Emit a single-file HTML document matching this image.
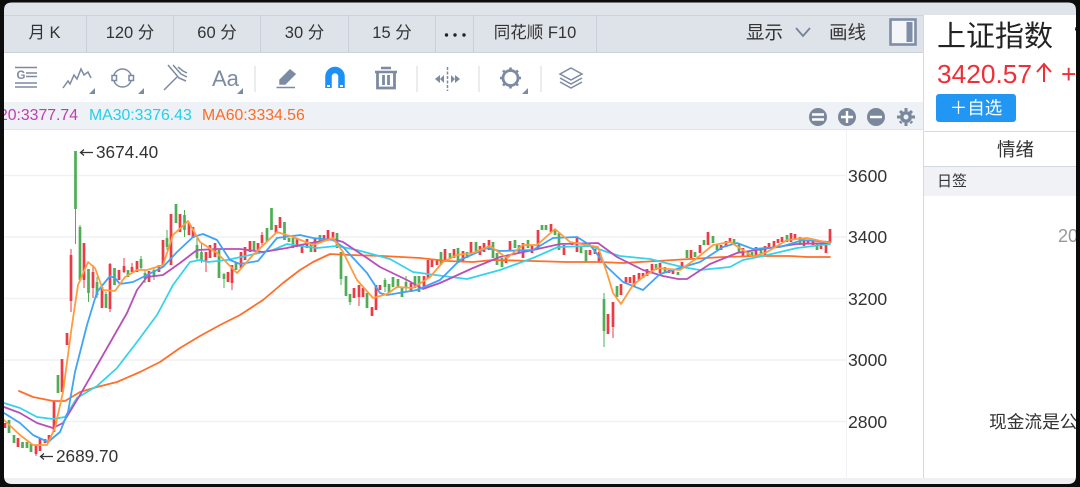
<!DOCTYPE html>
<html><head><meta charset="utf-8"><style>
*{margin:0;padding:0;box-sizing:border-box}
html,body{width:1080px;height:487px;overflow:hidden;background:#fff}
body{position:relative;font-family:"Liberation Sans","Noto Sans CJK SC",sans-serif;color:#333}
#w{position:absolute;left:0;top:0;width:1080px;height:487px;filter:blur(.35px)}
.a{position:absolute;white-space:nowrap}
.tab{position:absolute;top:15px;height:38px;line-height:37px;text-align:center;font-size:16.5px;border-right:1px solid #c9d0d9;color:#333}
svg{position:absolute;left:0;top:0}
</style></head><body><div id="w">
<div class="a" style="left:0;top:0;width:1080px;height:15px;background:#dfe4ea"></div>
<div class="a" style="left:0;top:15px;width:923px;height:38px;background:#dee3e9;border-top:1px solid #ccd3db;border-bottom:1px solid #ccd3db"></div>
<div class="tab" style="left:0;width:87px;padding-left:3px">月 K</div>
<div class="tab" style="left:87px;width:87px">120 分</div>
<div class="tab" style="left:174px;width:87px">60 分</div>
<div class="tab" style="left:261px;width:88px">30 分</div>
<div class="tab" style="left:349px;width:87px">15 分</div>
<div class="tab" style="left:436px;width:38px"></div>
<div class="tab" style="left:474px;width:123px">同花顺 F10</div>
<div class="a" style="left:746px;top:20px;font-size:18.5px;line-height:26px">显示</div>
<div class="a" style="left:829px;top:20px;font-size:18.5px;line-height:26px">画线</div>
<div class="a" style="left:0;top:102px;width:923px;height:28px;background:#eef1f5;border-bottom:1px solid #e0e4ea"></div>
<div class="a" style="left:923px;top:15px;width:1px;height:470px;background:#d5dae1"></div>
<div class="a" style="left:846px;top:130px;width:1px;height:348px;background:#eef0f3"></div>
<div class="a" style="left:0;top:478px;width:1080px;height:7px;background:#eef0f4"></div>

<div class="a" style="right:1002px;top:106px;font-size:15.8px;line-height:20px;color:#c23bb0">20:3377.74</div>
<div class="a" style="left:89px;top:106px;font-size:15.8px;line-height:20px;color:#22d0ea">MA30:3376.43</div>
<div class="a" style="left:202px;top:106px;font-size:15.8px;line-height:20px;color:#ff6a1f">MA60:3334.56</div>

<div class="a" style="left:96px;top:142px;font-size:17.2px;line-height:20px">3674.40</div>
<div class="a" style="left:56px;top:446px;font-size:17.2px;line-height:20px">2689.70</div>
<div class="a" style="left:848px;top:166px;font-size:17.6px;line-height:20px">3600</div>
<div class="a" style="left:848px;top:227px;font-size:17.6px;line-height:20px">3400</div>
<div class="a" style="left:848px;top:289px;font-size:17.6px;line-height:20px">3200</div>
<div class="a" style="left:848px;top:350px;font-size:17.6px;line-height:20px">3000</div>
<div class="a" style="left:848px;top:412px;font-size:17.6px;line-height:20px">2800</div>

<div class="a" style="left:937px;top:17px;font-size:29px;line-height:40px;color:#222">上证指数</div>
<div class="a" style="left:1074px;top:24px;font-size:16px;line-height:20px;color:#222">‘</div>
<div class="a" style="left:937px;top:58px;font-size:26.3px;line-height:32px;color:#ee2f37">3420.57</div>
<div class="a" style="left:1061px;top:58px;font-size:26.3px;line-height:32px;color:#ee2f37">+3</div>
<div class="a" style="left:936px;top:94px;width:80px;height:28px;background:#2196f3;border-radius:3px;color:#fff;font-size:17.5px;line-height:29px;text-align:center">＋自选</div>
<div class="a" style="left:924px;top:131px;width:156px;height:1px;background:#d5dae1"></div>
<div class="a" style="left:997px;top:137px;font-size:18.5px;line-height:26px">情绪</div>
<div class="a" style="left:924px;top:166px;width:156px;height:30px;background:#f0f2f5;border-top:1px solid #d5dae1"></div>
<div class="a" style="left:937px;top:171px;font-size:15px;line-height:22px">日签</div>
<div class="a" style="left:1058px;top:226px;font-size:18px;line-height:20px;color:#999">20</div>
<div class="a" style="left:989px;top:410px;font-size:17.7px;line-height:24px">现金流是公</div>

<svg width="1080" height="487" viewBox="0 0 1080 487" fill="none">
<!-- tab dots -->
<g fill="#222"><circle cx="446.500" cy="35" r="1.700"/><circle cx="455" cy="35" r="1.700"/><circle cx="464" cy="35" r="1.700"/></g>
<!-- price up arrow -->
<path stroke="#ee2f37" stroke-width="2" d="M1044 64V82M1037 72L1044 64L1051 72"/>
<!-- grid -->
<path d="M4 175.5H846M4 237H846M4 298.5H846M4 360H846M4 421.5H846" stroke="#f0f1f3" stroke-width="1.4"/>
<!-- red candles wicks -->
<path stroke="#ee3a44" stroke-width="1" d="M36 445V456M71 249V312M84 243V288M93 265V298M110 263V312M124 258V273M132 263V273M206 252V272M232 265V290M262 232V247M359 285V306M613 302V338"/>
<!-- red bodies -->
<path stroke="#ee3a44" stroke-width="2.7" d="M5 423V428M18 438V447M36 445V454M40 438V451M45 439V443M49 435V442M54 401V432M62 359V392M67 333V345M71 255V301M84 243V280M93 272V288M102 287V308M110 264V309M119 270V280M124 266V272M132 267V272M137 261V272M149 271V282M159 265V272M163 240V267M171 214V265M180 214V232M189 223V235M193 227V238M206 252V261M210 245V258M215 243V257M228 272V282M232 265V283M241 252V268M245 247V260M250 241V252M258 243V252M262 235V243M276 225V233M280 217V228M297 238V247M302 245V253M307 239V248M315 238V252M324 235V241M328 230V240M333 232V240M354 288V298M359 285V297M363 288V297M372 307V316M376 285V310M380 285V290M411 283V292M424 276V288M428 260V278M432 260V267M437 259V265M445 249V262M454 249V258M463 251V262M471 242V253M480 246V255M484 243V252M489 240V250M506 255V263M510 241V250M523 243V258M532 245V253M538 230V248M551 224V232M564 245V255M572 242V245M577 238V252M590 250V255M595 249V254M599 252V262M608 314V334M613 302V327M621 284V295M626 277V284M630 277V283M634 275V286M639 273V280M643 273V278M647 269V276M652 264V273M660 263V273M669 270V273M673 270V274M682 262V269M691 250V258M700 245V253M708 232V245M721 245V250M726 241V247M730 238V243M743 248V256M756 247V256M765 246V255M769 243V248M774 241V247M778 239V243M782 237V242M791 233V242M795 234V240M804 241V246M808 240V244M813 241V245M821 243V249M826 242V253M830 229V243"/>
<!-- green wicks -->
<path stroke="#4fae54" stroke-width="1" d="M75.5 151V244M80 225V282M88.5 269V302M97 277V298M106 292V308M141 256V270M145 270V283M154 267V280M167 230V250M184.5 210V237M197 235V260M201.5 243V263M224 273V288M341 252V285M350 294V305M385 278V292M406 276V292M604 293V347"/>
<!-- green bodies -->
<path stroke="#4fae54" stroke-width="2.7" d="M9 420V433M14 435V443M22.5 442V448M27 442V448M31 444V452M58 375V393M75.5 151V209M80 227V280M88.5 269V293M97 282V295M106 294V308M114.5 268V285M128 270V277M141 259V268M145 273V279M154 270V277M167 238V247M176 204V223M184.5 215V230M197 245V258M201.5 252V260M219 250V278M224 274V279M236 263V270M254 241V250M267 228V241M271.5 208V230M284.5 222V240M289 238V242M293 238V248M311 242V252M320 235V242M337 233V248M341 252V279M346 276V296M350 294V302M367 293V308M385 280V287M389 284V293M393 277V287M398 279V287M402 288V297M406 282V288M415 276V288M419 276V292M441 252V265M450 253V258M458 248V263M467 252V258M476 242V252M493 242V258M497 253V265M502 258V267M515 240V248M519 245V253M528 240V248M542 225V230M546 225V230M555 229V235M559 233V250M581 247V253M586 250V262M604 299V331M617 286V297M656 264V270M665 267V272M678 272V275M687 250V258M695 252V257M704 240V245M713 236V243M717 244V250M734 239V243M739 243V253M748 252V256M752 252V256M761 248V254M787 235V242M800 237V245M817 243V250"/>
<g stroke-width="1.8" stroke-linejoin="round" stroke-linecap="round">
<!-- MA60 -->
<polyline stroke="#ff6f2a" points="19,391 33,397 53,401 65,401 80,392 97,387 117,382 140,372 160,362 180,348 200,336 220,325 240,315 263,300 283,283 300,270 313,262 330,254 350,255 383,256 420,258 447,261 473,262 493,260 533,261 567,262 600,262 623,263 657,261 690,259 723,257 757,256 790,256 807,257 830,257"/>
<!-- MA30 -->
<polyline stroke="#35d3ea" points="4,403 20,408 37,417 53,419 65,417 77,398 97,386 117,368 137,342 157,315 173,285 190,262 200,260 208,262 227,260 250,255 273,250 287,244 300,246 317,248 337,246 342,247 357,250 390,259 413,272 443,276 467,279 500,270 533,258 558,247 590,246 607,252 620,256 650,259 682,267 700,270 730,267 743,260 763,256 797,248 830,244"/>
<!-- MA20 -->
<polyline stroke="#b84fb8" points="4,407 20,413 37,423 53,428 63,423 80,395 103,355 127,313 137,290 147,277 163,275 180,263 197,250 217,249 240,249 263,252 287,248 300,245 333,239 343,242 367,258 380,267 407,280 423,289 440,283 473,268 500,257 533,250 560,244 598,243 617,257 643,270 663,276 678,279 687,279 710,264 737,253 763,249 797,244 830,243"/>
<!-- MA10 -->
<polyline stroke="#3fa4f8" points="4,413 20,423 33,435 48,442 60,432 68,412 75,372 87,325 97,292 110,276 115,278 120,284 133,282 147,275 163,267 177,252 193,237 203,234 217,240 230,260 240,264 258,261 277,238 300,235 313,238 333,240 343,247 367,273 380,293 387,295 417,290 440,280 460,260 487,248 500,251 533,250 553,238 577,237 590,245 607,267 623,282 643,290 660,274 680,268 700,262 723,247 737,243 753,249 780,247 803,240 830,242"/>
<!-- MA5 -->
<polyline stroke="#ff9c3e" points="4,420 20,435 33,445 47,445 55,428 63,392 72,325 78,285 88,262 95,268 103,290 115,291 125,277 137,270 147,270 163,265 173,235 188,221 200,242 217,253 237,273 253,255 277,232 293,237 313,245 333,238 343,252 357,280 373,298 387,294 397,287 413,288 430,277 443,262 457,255 473,253 490,246 507,258 523,245 537,245 555,229 570,242 598,247 607,273 613,293 621,304 633,285 643,277 657,268 680,270 697,258 713,245 730,242 743,250 753,257 767,252 787,240 807,238 830,243"/>
</g>
<!-- price arrows -->
<path stroke="#333" stroke-width="1.3" d="M81 152.5H93M84 149.5L80.5 152.5L84 155.5M41 456.5H53M44 453.5L40.5 456.5L44 459.5"/>
<!-- chevron -->
<path stroke="#74839a" stroke-width="1.8" d="M796 28L803 36L810 28"/>
<!-- panel icon -->
<rect x="890.5" y="19.5" width="25" height="25" stroke="#7f8ea6" stroke-width="2.6" fill="#f3f5f8"/>
<rect x="906.5" y="22" width="6" height="20" fill="#7f8ea6"/>
<!-- toolbar icons -->
<g stroke="#7c8aa2" stroke-width="1.5" fill="none">
<path d="M15 67.500H37M26 73H37M26 76.500H37M15 83H37M15 87H37"/>
<path d="M63 88L68 81L70 84L74 75L77 79L81 69L84 75L88 72L91 78"/>
<circle cx="122.500" cy="78" r="9"/><rect x="112" y="75.500" width="4.500" height="5" fill="#fff"/><rect x="129" y="75.500" width="4.500" height="5" fill="#fff"/>
<path d="M164 90L177 77M168 65L179 78L186 81M173 65L181 74L187 77M178 67L183 71L187 73"/>
<path stroke="#e4e7ec" stroke-width="1.6" d="M255 66V92M417 66V92M479 66V92M541 66V92"/>
<path stroke-width="1.6" d="M276.5 87.5H295"/>
<path d="M280 80L290 70L295 74L285 84H280Z" fill="#7c8aa2"/>
<path stroke-width="2.5" d="M375 72H397M381 68H391"/>
<path stroke-width="2.8" d="M377.500 72V88H394.500V72M383.500 75V85M388.500 75V85"/>
<path stroke-dasharray="3 1.5" d="M447.500 67V91"/>
<path fill="#7c8aa2" stroke="none" d="M435 79L440 75V83ZM444 75V83L440 79ZM451 75V83L455 79ZM460 79L455 75V83Z"/>
<circle cx="510.500" cy="78" r="7.500" stroke-width="2.800"/>
<path stroke-width="2.600" d="M510.500 67.500V70.500M510.500 85.500V88.500M500 78H503M518 78H521M503 70.500L505 72.500M516 83.500L518 85.500M518 70.500L516 72.500M505 83.500L503 85.500"/>
<path d="M571 68L582 74L571 80L560 74Z"/>
<path d="M560 78L571 84L582 78M560 82L571 88L582 82"/>
</g>
<path fill="#7c8aa2" d="M95 88V94H89ZM144 88V94H138ZM243 88V94H237ZM528 88V94H522Z"/>
<text x="212" y="86" font-family="Liberation Sans" font-size="22" fill="#7c8aa2">Aa</text>
<text x="16.500" y="79" font-family="Liberation Sans" font-size="11.500" font-weight="bold" fill="#7c8aa2">G</text>
<!-- magnet -->
<path d="M328.500 88V76.500A6.500 6.500 0 0 1 341.500 76.500V88" stroke="#1b90f5" stroke-width="6.500"/>
<path stroke="#fff" stroke-width="2" d="M327 86H330M340 86H343"/>
<!-- zoom controls -->
<g fill="#7a879c">
<circle cx="818" cy="117" r="9"/><circle cx="847" cy="117" r="9"/><circle cx="876" cy="117" r="9"/>
<circle cx="906" cy="117" r="6"/>
</g>
<path stroke="#fff" stroke-width="2.400" d="M812 114.500H824M812 119.500H824M841 117H853M847 111V123M870 117H882"/>
<circle cx="906" cy="117" r="2.500" fill="#eef1f5"/>
<path stroke="#7a879c" stroke-width="3" d="M906 108V126M897 117H915M900 111L912 123M912 111L900 123" stroke-dasharray="3 12" />
<!-- frame -->
<path fill-rule="evenodd" fill="#0c0c0c" d="M0 0H1080V487H0ZM12 2.500Q4 2.500 4 10V476Q4 484 12 484H1068Q1076 484 1076 476V10Q1076 2.500 1068 2.500Z"/>
</svg>
</div></body></html>
